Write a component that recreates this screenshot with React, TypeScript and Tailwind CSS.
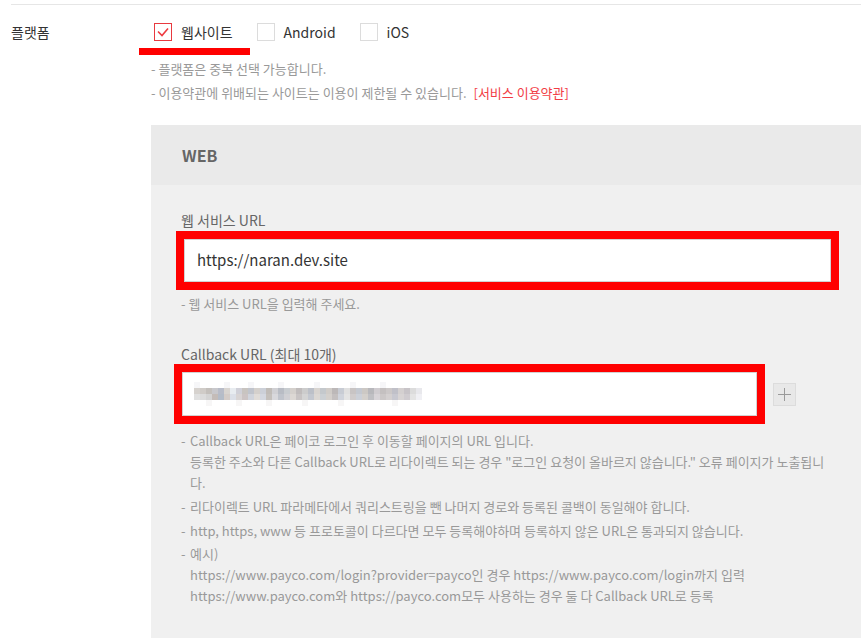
import React from "react";

const row1 = [
  "#d6d2ce","#d0ccc8","#c4c0bc","#c8c8cc","#b8bcc8","#d8d4d0","#e8ecf0","#d0d0d8","#c8c4c0","#c0c4cc",
  "#d4d0cc","#ccd0d8","#c0bcb8","#d0d0d4","#b8bcc4","#c8ccd0","#d4d0cc","#c0bcbc","#cccccc","#bcc0c8",
  "#d8d4d0","#c4c8cc","#d0ccc8","#bcb8b8","#c8ccd4","#e0e0e0","#c8c4c4","#c4c8d0","#ccc8c4","#b8b8bc",
  "#d0ccd0","#c4c0c0","#ccc8c8","#c0c0c8","#d4d0d0","#c8c4c8","#dcdcdc","#e8e8ec",
];
const row2 = [
  "#e0e0e0","#dcdcdc","#d4d4d4","#c4bcb8","#b4bcc8","#d4ccc8","#dce0e8","#d8d4d4","#ccc4c4","#d0d4dc",
  "#e0dcd8","#d4d8e0","#c4c0bc","#d8d8dc","#c0c4cc","#d0d0d4","#dcd8d4","#c8c4c4","#d4d4d4","#c4c8d0",
  "#dcd8d4","#ccd0d4","#d4d0cc","#c4c0c0","#d0d4dc","#e4e4e4","#d0cccc","#ccd0d8","#d4d0cc","#c0c0c4",
  "#d8d4d8","#ccc8c8","#d4d0d0","#c8c8d0","#d8d4d4","#d0ccd0","#e4e4e4","#f0f0f4",
];

function Mosaic() {
  return (
    <svg width="240" height="26" viewBox="0 0 240 26" className="block">
      {row1.map((c, i) => (
        <rect key={"a" + i} x={i * 6} y={7} width={6} height={6} fill={c} />
      ))}
      {row2.map((c, i) => (
        <rect key={"b" + i} x={i * 6} y={13} width={6} height={6} fill={c} />
      ))}
      {[0, 5, 9, 14, 20, 26, 31].map((i) => (
        <rect key={"t" + i} x={i * 6} y={1} width={6} height={6} fill="#f6f6f8" />
      ))}
      {[2, 7, 12, 18, 24, 33].map((i) => (
        <rect key={"u" + i} x={i * 6} y={19} width={6} height={6} fill="#f7f6f6" />
      ))}
    </svg>
  );
}

function Box({ checked }: { checked?: boolean }) {
  return (
    <span
      className={
        "flex h-[18px] w-[18px] items-center justify-center border bg-white " +
        (checked ? "border-[#e8393f]" : "border-[#dcdcdc]")
      }
    >
      {checked && (
        <svg width="12" height="10" viewBox="0 0 12 10">
          <path d="M1 4.5 L5 8.5 L11 1.5" fill="none" stroke="#ee3a40" strokeWidth="1.6" />
        </svg>
      )}
    </span>
  );
}

export default function App() {
  const font = { fontFamily: '"Noto Sans CJK KR", "Noto Sans", sans-serif' };
  return (
    <div className="relative h-[643px] w-[865px] overflow-hidden bg-white" style={font}>
      <div className="ml-[11px] mt-[4px] w-[850px] border-t border-[#e6e6e6]" />
      <div className="flex pl-[11px]">
        <div className="w-[140px] pt-[17px] text-[14px] leading-[20px] text-[#333]">플랫폼</div>
        <div className="flex-1">
          <div className="relative flex h-[52px] items-start pl-[3px] pt-[18px]">
            <label className="flex items-center">
              <Box checked />
              <span className="ml-[9px] text-[14px] leading-[18px] text-[#333]">웹사이트</span>
            </label>
            <label className="ml-[24px] flex items-center">
              <Box />
              <span className="ml-[9px] text-[14px] leading-[18px] text-[#333]">Android</span>
            </label>
            <label className="ml-[24px] flex items-center">
              <Box />
              <span className="ml-[9px] text-[14px] leading-[18px] text-[#333]">iOS</span>
            </label>
            <div className="absolute left-[-12px] top-[43px] h-[7px] w-[111px] bg-[#ff0000]" />
          </div>
          <div className="text-[13px] leading-[24px] text-[#999]">
            <p>- 플랫폼은 중복 선택 가능합니다.</p>
            <p>
              - 이용약관에 위배되는 사이트는 이용이 제한될 수 있습니다.{" "}
              <span className="ml-[4px] text-[#f23d45]">[서비스 이용약관]</span>
            </p>
          </div>
          <div className="mt-[20px] w-[710px] bg-[#f0f0f0]">
            <div className="flex h-[60px] items-center bg-[#eaeaea] pl-[31px] text-[16px] font-bold text-[#666]">
              WEB
            </div>
            <div className="px-[30px] pb-[32px] pt-[25px]">
              <div className="text-[14px] leading-[20px] text-[#666]">웹 서비스 URL</div>
              <div className="mt-[1px] ml-[-5px] w-[663px] border-[8px] border-[#ff0000]">
                <div className="flex h-[43px] items-center border border-[#d2d2d2] bg-white pl-[12px] text-[15px] text-[#333]">
                  https://naran.dev.site
                </div>
              </div>
              <div className="mt-[4px] text-[13px] leading-[20px] text-[#999]">- 웹 서비스 URL을 입력해 주세요.</div>
              <div className="mt-[30px] text-[14px] leading-[20px] text-[#666]">Callback URL (최대 10개)</div>
              <div className="flex items-center">
                <div className="ml-[-7px] w-[591px] border-[8px] border-[#ff0000]">
                  <div className="flex h-[44px] items-center border border-[#d2d2d2] bg-white pl-[11px]">
                    <Mosaic />
                  </div>
                </div>
                <button className="ml-[8px] flex h-[23px] w-[23px] items-center justify-center border border-[#dcdcdc] bg-[#e8e8e8]">
                  <svg width="13" height="13" viewBox="0 0 13 13">
                    <path d="M6.5 0 V13 M0 6.5 H13" stroke="#9a9a9a" strokeWidth="1" />
                  </svg>
                </button>
              </div>
              <div className="mt-[6px] text-[13px] leading-[21px] text-[#999]">
                <div className="flex">
                  <span className="w-[9px] shrink-0">-</span>
                  <span>
                    Callback URL은 페이코 로그인 후 이동할 페이지의 URL 입니다.
                    <br />
                    등록한 주소와 다른 Callback URL로 리다이렉트 되는 경우 "로그인 요청이 올바르지 않습니다." 오류 페이지가 노출됩니다.
                  </span>
                </div>
                <div className="mt-[3px] flex">
                  <span className="w-[9px] shrink-0">-</span>
                  <span>리다이렉트 URL 파라메타에서 쿼리스트링을 뺀 나머지 경로와 등록된 콜백이 동일해야 합니다.</span>
                </div>
                <div className="mt-[3px] flex">
                  <span className="w-[9px] shrink-0">-</span>
                  <span>http, https, www 등 프로토콜이 다르다면 모두 등록해야하며 등록하지 않은 URL은 통과되지 않습니다.</span>
                </div>
                <div className="mt-[2px] flex">
                  <span className="w-[9px] shrink-0">-</span>
                  <span>
                    예시)
                    <br />
                    https://www.payco.com/login?provider=payco인 경우 https://www.payco.com/login까지 입력
                    <br />
                    https://www.payco.com와 https://payco.com모두 사용하는 경우 둘 다 Callback URL로 등록
                  </span>
                </div>
              </div>
            </div>
          </div>
        </div>
      </div>
    </div>
  );
}
